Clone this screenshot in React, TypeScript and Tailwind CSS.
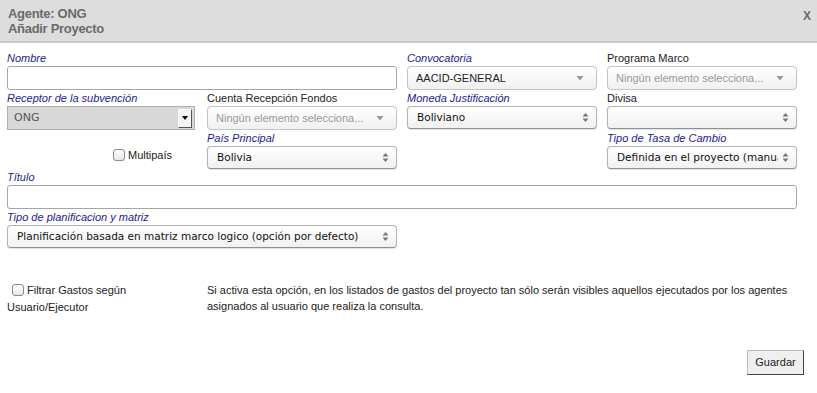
import React from 'react'

const font = { fontFamily: '"Liberation Sans", Arial, sans-serif' }

function Label({ text, req = false }: { text: string; req?: boolean }) {
    return (
        <div
            className={`h-[14px] text-[11px] leading-[14px] ${req ? 'italic text-[#1c1c8f]' : 'text-[#222]'}`}
        >
            {text}
        </div>
    )
}

function UpDown() {
    return (
        <svg width="7" height="11" viewBox="0 0 7 11" className="shrink-0">
            <path d="M3.5 1 L6.5 4.5 L0.5 4.5 Z" fill="#777" />
            <path d="M3.5 10 L6.5 6.5 L0.5 6.5 Z" fill="#777" />
        </svg>
    )
}

function Down() {
    return (
        <svg width="8" height="6" viewBox="0 0 8 6" className="shrink-0">
            <path d="M0.5 1 L7.5 1 L4 5.5 Z" fill="#999" />
        </svg>
    )
}

// mac-like select, up/down arrows
function MacSelect({ value, className = '' }: { value: string; className?: string }) {
    return (
        <div
            className={`flex h-[23px] items-center justify-between gap-[4px] rounded-[4px] border border-[#b3b3b3] border-b-[#8f8f8f] bg-gradient-to-b from-white to-[#f1f1f1] pl-[9px] pr-[7px] shadow-[0_1px_1px_rgba(0,0,0,0.12)] ${className}`}
        >
            <span
                className="overflow-hidden whitespace-nowrap text-[10.5px] text-[#111]"
                style={{ fontFamily: '"DejaVu Sans", sans-serif' }}
            >
                {value}
            </span>
            <UpDown />
        </div>
    )
}

// chosen-like dropdown
function Chosen({ value, muted = false }: { value: string; muted?: boolean }) {
    return (
        <div className="flex h-[24px] items-center justify-between rounded-[4px] border border-[#c4c4c4] bg-gradient-to-b from-white to-[#f0f0f0] pl-[8px] pr-[12px]">
            <span className={`truncate whitespace-nowrap text-[11px] ${muted ? 'text-[#999]' : 'text-[#222]'}`}>
                {value}
            </span>
            <Down />
        </div>
    )
}

function Checkbox() {
    return (
        <span className="inline-block h-[12px] w-[12px] rounded-[3px] border border-[#8a8a8a] bg-gradient-to-b from-white to-[#e8e8e8]" />
    )
}

export default function App() {
    return (
        <div className="h-[393px] w-[817px] bg-white" style={font}>
            {/* Header */}
            <div className="flex h-[43px] items-start justify-between border-b-2 border-[#c9c9c9] bg-[#dddddd] pl-[8px] pr-[6px] pt-[6px]">
                <div className="text-[13px] font-bold leading-[15px] tracking-[-0.3px] text-[#6a6a6a]">
                    <div>Agente: ONG</div>
                    <div>Añadir Proyecto</div>
                </div>
                <div className="pt-[1px] text-[12px] font-bold text-[#6a6a6a]">X</div>
            </div>

            {/* Form */}
            <div className="px-[7px] pt-[8px]">
                <div className="grid grid-cols-[190px_190px_190px_190px] gap-x-[10px] gap-y-[1px]">
                    {/* row 1 */}
                    <div className="col-span-2">
                        <Label text="Nombre" req />
                        <div className="mt-[1px] h-[24px] rounded-[3px] border border-[#a6a6a6] bg-white" />
                    </div>
                    <div>
                        <Label text="Convocatoria" req />
                        <div className="mt-[1px]">
                            <Chosen value="AACID-GENERAL" />
                        </div>
                    </div>
                    <div>
                        <Label text="Programa Marco" />
                        <div className="mt-[1px]">
                            <Chosen value="Ningún elemento selecciona..." muted />
                        </div>
                    </div>

                    {/* row 2 */}
                    <div>
                        <Label text="Receptor de la subvención" req />
                        <div className="mt-[1px] flex h-[24px] w-[188px] items-center justify-between border border-[#b0b0b0] bg-[#d8d8d8] pl-[6px] pr-[2px]">
                            <span
                                className="text-[11px] text-[#555]"
                                style={{ fontFamily: '"DejaVu Sans", sans-serif' }}
                            >
                                ONG
                            </span>
                            <span className="flex h-[19px] w-[14px] items-center justify-center border border-[#fff] border-b-[#555] border-r-[#555] bg-[#f4f4f4]">
                                <svg width="6" height="4" viewBox="0 0 6 4">
                                    <path d="M0 0 L6 0 L3 4 Z" fill="#000" />
                                </svg>
                            </span>
                        </div>
                    </div>
                    <div>
                        <Label text="Cuenta Recepción Fondos" />
                        <div className="mt-[1px]">
                            <Chosen value="Ningún elemento selecciona..." muted />
                        </div>
                    </div>
                    <div>
                        <Label text="Moneda Justificación" req />
                        <div className="mt-[1px]">
                            <MacSelect value="Boliviano" />
                        </div>
                    </div>
                    <div>
                        <Label text="Divisa" />
                        <div className="mt-[1px]">
                            <MacSelect value="" />
                        </div>
                    </div>

                    {/* row 3 */}
                    <div className="flex items-end pb-[6px] pl-[106px]">
                        <label className="flex items-center gap-[3px] text-[11px] text-[#222]">
                            <Checkbox />
                            Multipaís
                        </label>
                    </div>
                    <div>
                        <Label text="País Principal" req />
                        <div className="mt-[1px]">
                            <MacSelect value="Bolivia" />
                        </div>
                    </div>
                    <div />
                    <div>
                        <Label text="Tipo de Tasa de Cambio" req />
                        <div className="mt-[1px]">
                            <MacSelect value="Definida en el proyecto (manual)" />
                        </div>
                    </div>

                    {/* row 4 */}
                    <div className="col-span-4">
                        <Label text="Título" req />
                        <div className="mt-[1px] h-[24px] rounded-[3px] border border-[#a6a6a6] bg-white" />
                    </div>

                    {/* row 5 */}
                    <div className="col-span-2">
                        <Label text="Tipo de planificacion y matriz" req />
                        <div className="mt-[1px]">
                            <MacSelect value="Planificación basada en matriz marco logico (opción por defecto)" />
                        </div>
                    </div>
                </div>

                {/* Filtro */}
                <div className="mt-[34px] flex text-[11px] leading-[16px] text-[#222]">
                    <div className="w-[200px]">
                        <div className="flex items-center gap-[3px] pl-[5px]">
                            <Checkbox />
                            <span>Filtrar Gastos según</span>
                        </div>
                        <div className="mt-[1px]">Usuario/Ejecutor</div>
                    </div>
                    <div className="w-[590px]">
                        Si activa esta opción, en los listados de gastos del proyecto tan sólo serán visibles aquellos
                        ejecutados por los agentes asignados al usuario que realiza la consulta.
                    </div>
                </div>

                <div className="mt-[35px] flex justify-end pr-[6px]">
                    <button className="h-[25px] w-[57px] border border-[#bbb] border-b-[#444] border-r-[#444] bg-[#efefef] text-[11px] text-[#222]">
                        Guardar
                    </button>
                </div>
            </div>
        </div>
    )
}
